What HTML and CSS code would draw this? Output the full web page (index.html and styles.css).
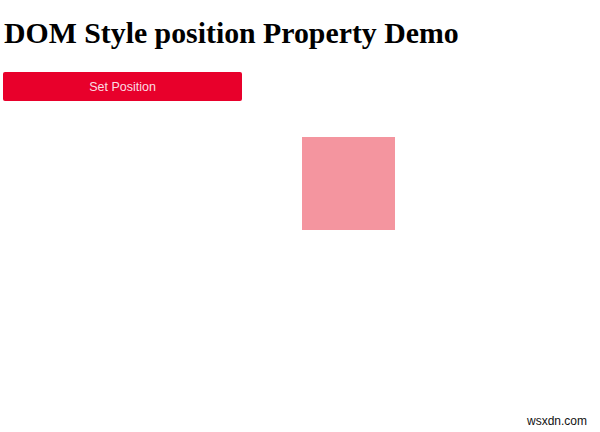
FILE: index.html
```html
<!DOCTYPE html>
<html>
<head>
<meta charset="utf-8">
<link rel="stylesheet" href="styles.css">
</head>
<body>
<h1 class="title">DOM Style position Property Demo</h1>
<button class="set-btn">Set Position</button>
<div class="box"></div>
<div class="watermark">wsxdn.com</div>
</body>
</html>
```
FILE: styles.css
```css
html, body {
  margin: 0;
  padding: 0;
  background: #ffffff;
  width: 600px;
  height: 432px;
  overflow: hidden;
}
body {
  position: relative;
  padding: 0 3px;
  box-sizing: border-box;
}
.title {
  font-family: "Liberation Serif", serif;
  font-weight: bold;
  font-size: 29.8px;
  line-height: 34px;
  margin: 16px 0 0 1px;
  color: #000;
}
.set-btn {
  display: block;
  margin-top: 22px;
  width: 239px;
  height: 29px;
  background: #e8002b;
  color: #fbdde2;
  border: none;
  border-radius: 2px;
  font-family: "Liberation Sans", Arial, sans-serif;
  font-size: 12.5px;
  padding: 0;
}
.box {
  position: absolute;
  left: 302px;
  top: 137px;
  width: 93px;
  height: 93px;
  background: #f4959f;
}
.watermark {
  position: absolute;
  left: 527px;
  top: 414px;
  font-family: "Liberation Sans", Arial, sans-serif;
  font-size: 12px;
  color: #111;
}
```
